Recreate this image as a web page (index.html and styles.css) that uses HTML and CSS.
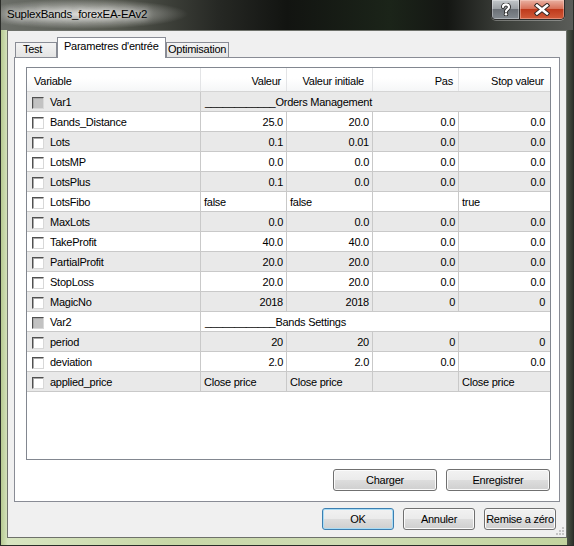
FILE: index.html
```html
<!DOCTYPE html>
<html lang="fr">
<head>
  <meta charset="UTF-8">
  <meta name="viewport" content="width=device-width, initial-scale=1.0">
  <link rel="stylesheet" href="styles.css">
  <title>SuplexBands_forexEA-EAv2</title>
</head>
<body>
  <div class="window">
    <div class="titlebar">
      <span class="title">SuplexBands_forexEA-EAv2</span>
      <div class="caption-buttons">
        <div class="cap-btn help">
          <svg width="12" height="13" viewBox="-6 -7 12 13">
            <path d="M-3,-3 C-3,-6.5 3,-6.5 3,-3 C3,-0.5 0,-0.8 0,1.6" fill="none" stroke="#2b2b2b" stroke-width="4" stroke-linecap="round"/>
            <circle cx="0" cy="4.3" r="2.2" fill="#2b2b2b"/>
            <path d="M-3,-3 C-3,-6.5 3,-6.5 3,-3 C3,-0.5 0,-0.8 0,1.6" fill="none" stroke="#fff" stroke-width="2.2" stroke-linecap="round"/>
            <circle cx="0" cy="4.3" r="1.3" fill="#fff"/>
          </svg>
        </div>
        <div class="cap-btn close">
          <svg width="16" height="13" viewBox="-8 -6.5 16 13">
            <path d="M-5,-4 L5,4 M5,-4 L-5,4" stroke="#3a2a26" stroke-width="4.6" stroke-linecap="square"/>
            <path d="M-5,-4 L5,4 M5,-4 L-5,4" stroke="#fff" stroke-width="2.6" stroke-linecap="square"/>
          </svg>
        </div>
      </div>
    </div>

    <div class="frame">
      <div class="client">
        <div class="tabs">
          <div class="tab tab-test">Test</div>
          <div class="tab tab-active">Parametres d'entrée</div>
          <div class="tab tab-opt">Optimisation</div>
        </div>

        <div class="panel">
          <div class="grid">
            <div class="head">
              <div class="hcell">Variable</div>
              <div class="hcell num">Valeur</div>
              <div class="hcell num wide-pad">Valeur initiale</div>
              <div class="hcell num">Pas</div>
              <div class="hcell num">Stop valeur</div>
            </div>

            <div class="rows">
              <div class="row">
                <div class="name"><span class="cb cb-group"></span><span>Var1</span></div>
                <div class="cell group">____________Orders Management</div>
              </div>
              <div class="row">
                <div class="name"><span class="cb"></span><span>Bands_Distance</span></div>
                <div class="cell num">25.0</div><div class="cell num">20.0</div><div class="cell num">0.0</div><div class="cell num">0.0</div>
              </div>
              <div class="row">
                <div class="name"><span class="cb"></span><span>Lots</span></div>
                <div class="cell num">0.1</div><div class="cell num">0.01</div><div class="cell num">0.0</div><div class="cell num">0.0</div>
              </div>
              <div class="row">
                <div class="name"><span class="cb"></span><span>LotsMP</span></div>
                <div class="cell num">0.0</div><div class="cell num">0.0</div><div class="cell num">0.0</div><div class="cell num">0.0</div>
              </div>
              <div class="row">
                <div class="name"><span class="cb"></span><span>LotsPlus</span></div>
                <div class="cell num">0.1</div><div class="cell num">0.0</div><div class="cell num">0.0</div><div class="cell num">0.0</div>
              </div>
              <div class="row">
                <div class="name"><span class="cb"></span><span>LotsFibo</span></div>
                <div class="cell">false</div><div class="cell">false</div><div class="cell"></div><div class="cell">true</div>
              </div>
              <div class="row">
                <div class="name"><span class="cb"></span><span>MaxLots</span></div>
                <div class="cell num">0.0</div><div class="cell num">0.0</div><div class="cell num">0.0</div><div class="cell num">0.0</div>
              </div>
              <div class="row">
                <div class="name"><span class="cb"></span><span>TakeProfit</span></div>
                <div class="cell num">40.0</div><div class="cell num">40.0</div><div class="cell num">0.0</div><div class="cell num">0.0</div>
              </div>
              <div class="row">
                <div class="name"><span class="cb"></span><span>PartialProfit</span></div>
                <div class="cell num">20.0</div><div class="cell num">20.0</div><div class="cell num">0.0</div><div class="cell num">0.0</div>
              </div>
              <div class="row">
                <div class="name"><span class="cb"></span><span>StopLoss</span></div>
                <div class="cell num">20.0</div><div class="cell num">20.0</div><div class="cell num">0.0</div><div class="cell num">0.0</div>
              </div>
              <div class="row">
                <div class="name"><span class="cb"></span><span>MagicNo</span></div>
                <div class="cell num">2018</div><div class="cell num">2018</div><div class="cell num">0</div><div class="cell num">0</div>
              </div>
              <div class="row">
                <div class="name"><span class="cb cb-group"></span><span>Var2</span></div>
                <div class="cell group">____________Bands Settings</div>
              </div>
              <div class="row">
                <div class="name"><span class="cb"></span><span>period</span></div>
                <div class="cell num">20</div><div class="cell num">20</div><div class="cell num">0</div><div class="cell num">0</div>
              </div>
              <div class="row">
                <div class="name"><span class="cb"></span><span>deviation</span></div>
                <div class="cell num">2.0</div><div class="cell num">2.0</div><div class="cell num">0.0</div><div class="cell num">0.0</div>
              </div>
              <div class="row">
                <div class="name"><span class="cb"></span><span>applied_price</span></div>
                <div class="cell">Close price</div><div class="cell">Close price</div><div class="cell"></div><div class="cell">Close price</div>
              </div>
            </div>
          </div>

          <div class="panel-buttons">
            <button class="btn">Charger</button>
            <button class="btn">Enregistrer</button>
          </div>
        </div>

        <div class="dialog-buttons">
          <button class="btn btn-default">OK</button>
          <button class="btn">Annuler</button>
          <button class="btn">Remise a zéro</button>
        </div>

        <svg class="grip" width="10" height="10" viewBox="0 0 10 10">
          <rect x="7" y="1" width="2" height="2" fill="#c4c4c4"/>
          <rect x="4" y="4" width="2" height="2" fill="#c4c4c4"/>
          <rect x="7" y="4" width="2" height="2" fill="#c4c4c4"/>
          <rect x="1" y="7" width="2" height="2" fill="#c4c4c4"/>
          <rect x="4" y="7" width="2" height="2" fill="#c4c4c4"/>
          <rect x="7" y="7" width="2" height="2" fill="#c4c4c4"/>
        </svg>
      </div>
    </div>
  </div>
</body>
</html>
```

FILE: styles.css
```css
body {
  margin: 0;
  padding: 0;
  font-family: "Liberation Sans", Arial, sans-serif;
  font-size: 11px;
  letter-spacing: -0.25px;
  color: #000;
  overflow: hidden;
}

.window {
  box-sizing: border-box;
  width: 574px;
  height: 546px;
  display: flex;
  flex-direction: column;
  border: 1px solid #2a2c28;
  border-top: none;
  background: #3a3d37;
}

/* aero glass title bar */
.titlebar {
  height: 30px;
  flex: none;
  display: flex;
  justify-content: space-between;
  align-items: flex-start;
  background:
    radial-gradient(ellipse 105px 15px at 82px 14px, rgba(225, 225, 222, 0.95), rgba(225, 225, 222, 0) 100%),
    linear-gradient(to right, #6b6e68 0, #55584f 20%, #262824 38%, #121411 50%, #1b2419 68%, #141613 78%, #3d403b 88%, #5a5c58 100%);
}

.title {
  padding: 6px 0 0 6px;
  line-height: 16px;
  font-size: 11.5px;
  text-shadow: 0 0 6px rgba(255, 255, 255, 0.9), 0 0 10px rgba(255, 255, 255, 0.6);
}

.caption-buttons {
  display: flex;
  margin-right: 8px;
  border: 1px solid #2c2c2c;
  border-top: none;
  border-radius: 0 0 5px 5px;
  overflow: hidden;
  box-shadow: 0 1px 0 rgba(255, 255, 255, 0.3);
}

.cap-btn {
  height: 19px;
  display: flex;
  align-items: center;
  justify-content: center;
}

.help {
  width: 27px;
  border-right: 1px solid #2c2c2c;
  background: linear-gradient(#c3c7ca, #9da2a6 45%, #6c7177 50%, #848a90 100%);
  box-shadow: inset 0 0 0 1px rgba(255, 255, 255, 0.35);
}

.close {
  width: 44px;
  background: linear-gradient(#e9b1a2, #d8725a 45%, #bf3a1c 50%, #d15b3a 100%);
  box-shadow: inset 0 0 0 1px rgba(255, 220, 210, 0.4);
}

.frame {
  flex: 1;
  display: flex;
  flex-direction: column;
  padding: 0 6px 7px 6px;
  background:
    linear-gradient(to right, #4c5447, #2e332b) right top / 6px 100% no-repeat,
    linear-gradient(to right, #b7ca92 0, #d8e5c1 1.2%, #c8d8a7 30%, #cfdcb4 60%, #c3d49f 100%);
}

.client {
  position: relative;
  flex: 1;
  display: flex;
  flex-direction: column;
  padding: 0 6px;
  background-color: #f0f0f0;
  border: 1px solid #6e716b;
}

/* tabs */
.tabs {
  display: flex;
  align-items: flex-end;
  height: 20px;
  margin: 6px 0 0 1px;
}

.tab {
  box-sizing: border-box;
  height: 15px;
  line-height: 12px;
  border: 1px solid #898c95;
  border-bottom: none;
  background: linear-gradient(#f3f3f3, #e4e4e4);
  white-space: nowrap;
}

.tab-test {
  width: 42px;
  padding-left: 7px;
}

.tab-active {
  width: 109px;
  height: 21px;
  line-height: 16px;
  padding-left: 6px;
  margin-bottom: -1px;
  background: #fff;
  position: relative;
  z-index: 1;
}

.tab-opt {
  width: 63px;
  padding-left: 1px;
}

.panel {
  box-sizing: border-box;
  height: 445px;
  padding: 9px 8px 10px 11px;
  background-color: #fff;
  border: 1px solid #898c95;
}

/* parameter list */
.grid {
  box-sizing: border-box;
  height: 393px;
  border: 1px solid #828790;
  background-color: #fff;
  overflow: hidden;
}

.head,
.row {
  display: grid;
  grid-template-columns: 174px 86px 86px 86px 91px;
  box-sizing: border-box;
}

.head {
  height: 24px;
  line-height: 21px;
  border-bottom: 1px solid #d5d5d5;
  background: linear-gradient(#fff 0, #fff 45%, #f5f6f7 100%);
}

.hcell {
  box-sizing: border-box;
  padding: 3px 5px 0 7px;
  border-right: 1px solid #e3e4e6;
  white-space: nowrap;
  overflow: hidden;
}

.hcell:last-child {
  border-right: none;
  padding-right: 6px;
}

.hcell.wide-pad {
  padding-right: 8px;
}

.row {
  height: 20px;
  line-height: 19px;
  border-bottom: 1px solid #c9c9c9;
}

.rows .row:nth-child(odd) {
  background-color: #e9e9e9;
}

.name {
  display: flex;
  align-items: flex-start;
  box-sizing: border-box;
  padding: 1px 0 0 5px;
  border-right: 1px solid #c9c9c9;
  white-space: nowrap;
  overflow: hidden;
}

.name span:last-child {
  margin-left: 6px;
}

.cb {
  box-sizing: border-box;
  width: 12px;
  height: 12px;
  margin-top: 4px;
  flex: none;
  background-color: #fff;
  border: 1px solid;
  border-color: #505050 #d8d8d8 #d8d8d8 #505050;
  box-shadow: inset 1px 1px 0 #a8a8a8;
}

.cb-group {
  background-color: #c2c2c2;
}

.cell {
  box-sizing: border-box;
  padding: 1px 3px 0;
  border-right: 1px solid #c9c9c9;
  white-space: nowrap;
  overflow: hidden;
  height: 19px;
}

.cell:last-child {
  border-right: none;
  padding-right: 5px;
}

.num {
  text-align: right;
}

.cell.group {
  grid-column: span 4;
  padding-left: 4px;
}

/* buttons */
.btn {
  box-sizing: border-box;
  height: 22px;
  padding: 0;
  font-family: inherit;
  font-size: 11px;
  letter-spacing: -0.25px;
  color: #000;
  border: 1px solid #707070;
  border-radius: 3px;
  background: linear-gradient(#f2f2f2 0, #ebebeb 48%, #dddddd 52%, #cfcfcf 100%);
  box-shadow: inset 0 0 0 1px #fbfbfb;
}

.btn-default {
  border-color: #3c7fb1;
  box-shadow: inset 0 0 0 1px #a9dcf5;
}

.panel-buttons {
  display: flex;
  justify-content: flex-end;
  gap: 9px;
  margin: 9px 1px 0 0;
}

.panel-buttons .btn {
  width: 104px;
}

.dialog-buttons {
  display: flex;
  justify-content: flex-end;
  gap: 9px;
  margin: 6px 4px 0 0;
}

.dialog-buttons .btn {
  width: 72px;
}

.grip {
  position: absolute;
  right: 1px;
  bottom: 1px;
}
```
